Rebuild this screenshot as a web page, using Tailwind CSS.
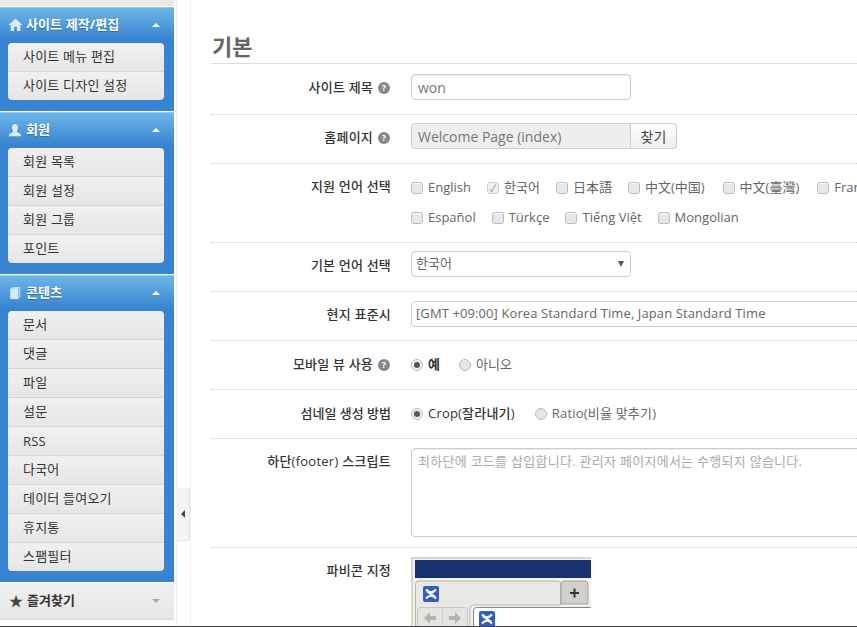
<!DOCTYPE html>
<html lang="ko">

<head>
    <meta charset="UTF-8">
    <title>기본 설정</title>
    <script src="https://cdn.jsdelivr.net/npm/@tailwindcss/browser@4"></script>
</head>

<body class="bg-white text-[#333] text-[13px] font-['Open_Sans','Noto_Sans_CJK_KR',sans-serif]">
    <div class="flex flex-col h-[627px] w-[857px] overflow-hidden">
        <div class="flex flex-1 min-h-0 overflow-hidden">

            <!-- Sidebar -->
            <aside class="w-[174px] shrink-0 flex flex-col">
                <div class="h-[6px] bg-[#e8e8e8]"></div>

                <section class="mt-px h-[104px] bg-gradient-to-b from-[#6db6e8] from-0% to-[#3884d0] to-[32px] border-t border-[#8cc8ee]">
                    <h2 class="flex items-center h-[33px] mb-[2px] pl-2 pr-[14px] text-white font-bold [text-shadow:0_1px_1px_#2a6cad]">
                        <svg viewBox="0 0 16 16" class="w-[15px] h-[15px] mr-[3px] fill-[#d6eafa]"><path d="M8 1.500 0.500 8.500h2.300V15h3.700v-4.500h3V15h3.700V8.500h2.300z"/></svg>
                        <span class="flex-1 tracking-[0.1px]">사이트 제작/편집</span>
                        <span class="border-x-[4px] border-x-transparent border-b-[4px] border-b-white"></span>
                    </h2>
                    <ul class="ml-2 mr-[10px] rounded-[4px] overflow-hidden tracking-[0.2px]">
                        <li class="h-[29px] pl-[15px] flex items-center bg-gradient-to-b from-[#f0f0f0] to-[#e6e6e6] border-b border-[#d6d6d6]">사이트 메뉴 편집</li>
                        <li class="h-[28px] pl-[15px] flex items-center bg-gradient-to-b from-[#f0f0f0] to-[#e6e6e6]">사이트 디자인 설정</li>
                    </ul>
                </section>

                <section class="mt-px h-[162px] bg-gradient-to-b from-[#6db6e8] from-0% to-[#3884d0] to-[32px] border-t border-[#8cc8ee]">
                    <h2 class="flex items-center h-[33px] mb-[2px] pl-2 pr-[14px] text-white font-bold [text-shadow:0_1px_1px_#2a6cad]">
                        <svg viewBox="0 0 16 16" class="w-[14px] h-[14px] mr-1 fill-[#d6eafa]"><path d="M8 1c2.200 0 3.500 1.800 3.500 3.800S10.300 9 10 9.500c0 .8.800 1.200 2.500 1.800S15 12.800 15 15H1c0-2.200.8-3.100 2.500-3.700S6 10.300 6 9.500C5.700 9 4.500 6.800 4.500 4.800S5.800 1 8 1z"/></svg>
                        <span class="flex-1">회원</span>
                        <span class="border-x-[4px] border-x-transparent border-b-[4px] border-b-white"></span>
                    </h2>
                    <ul class="ml-2 mr-[10px] rounded-[4px] overflow-hidden tracking-[0.2px]">
                        <li class="h-[29px] pl-[15px] flex items-center bg-gradient-to-b from-[#f0f0f0] to-[#e6e6e6] border-b border-[#d6d6d6]">회원 목록</li>
                        <li class="h-[29px] pl-[15px] flex items-center bg-gradient-to-b from-[#f0f0f0] to-[#e6e6e6] border-b border-[#d6d6d6]">회원 설정</li>
                        <li class="h-[29px] pl-[15px] flex items-center bg-gradient-to-b from-[#f0f0f0] to-[#e6e6e6] border-b border-[#d6d6d6]">회원 그룹</li>
                        <li class="h-[28px] pl-[15px] flex items-center bg-gradient-to-b from-[#f0f0f0] to-[#e6e6e6]">포인트</li>
                    </ul>
                </section>

                <section class="mt-px h-[307px] bg-gradient-to-b from-[#6db6e8] from-0% to-[#3884d0] to-[32px] border-t border-[#8cc8ee]">
                    <h2 class="flex items-center h-[33px] mb-[2px] pl-2 pr-[14px] text-white font-bold [text-shadow:0_1px_1px_#2a6cad]">
                        <svg viewBox="0 0 16 16" class="w-[14px] h-[14px] mr-1 fill-[#d6eafa]"><path d="M2.500 2.500h9.500V15H2.500z"/><path d="M4 1h10v12h-1V2H4z"/></svg>
                        <span class="flex-1">콘텐츠</span>
                        <span class="border-x-[4px] border-x-transparent border-b-[4px] border-b-white"></span>
                    </h2>
                    <ul class="ml-2 mr-[10px] rounded-[4px] overflow-hidden tracking-[0.2px]">
                        <li class="h-[29px] pl-[15px] flex items-center bg-gradient-to-b from-[#f0f0f0] to-[#e6e6e6] border-b border-[#d6d6d6]">문서</li>
                        <li class="h-[29px] pl-[15px] flex items-center bg-gradient-to-b from-[#f0f0f0] to-[#e6e6e6] border-b border-[#d6d6d6]">댓글</li>
                        <li class="h-[29px] pl-[15px] flex items-center bg-gradient-to-b from-[#f0f0f0] to-[#e6e6e6] border-b border-[#d6d6d6]">파일</li>
                        <li class="h-[29px] pl-[15px] flex items-center bg-gradient-to-b from-[#f0f0f0] to-[#e6e6e6] border-b border-[#d6d6d6]">설문</li>
                        <li class="h-[29px] pl-[15px] pt-px flex items-center bg-gradient-to-b from-[#f0f0f0] to-[#e6e6e6] border-b border-[#d6d6d6]">RSS</li>
                        <li class="h-[29px] pl-[15px] flex items-center bg-gradient-to-b from-[#f0f0f0] to-[#e6e6e6] border-b border-[#d6d6d6]">다국어</li>
                        <li class="h-[29px] pl-[15px] flex items-center bg-gradient-to-b from-[#f0f0f0] to-[#e6e6e6] border-b border-[#d6d6d6]">데이터 들여오기</li>
                        <li class="h-[29px] pl-[15px] flex items-center bg-gradient-to-b from-[#f0f0f0] to-[#e6e6e6] border-b border-[#d6d6d6]">휴지통</li>
                        <li class="h-[28px] pl-[15px] flex items-center bg-gradient-to-b from-[#f0f0f0] to-[#e6e6e6]">스팸필터</li>
                    </ul>
                </section>

                <h2 class="mt-px h-[37px] pb-[1px] flex items-center pl-[9px] pr-[14px] font-bold text-[#333] bg-gradient-to-b from-[#f0f0f0] to-[#e6e6e6] border-b border-[#dcdcdc]">
                    <span class="mr-1 text-[14px] leading-none text-[#444]">★</span>
                    <span class="flex-1">즐겨찾기</span>
                    <span class="border-x-[4px] border-x-transparent border-t-[4px] border-t-[#aaa]"></span>
                </h2>
            </aside>

            <!-- Sidebar collapse handle -->
            <div class="w-[16px] shrink-0 flex flex-col pl-[2px]">
                <div class="flex-1 border-l border-[#f0f0f0]"></div>
                <div class="h-[53px] bg-[#f4f4f4] border-b border-r border-[#e4e4e4] rounded-br-[2px] flex items-center justify-center">
                    <span class="border-y-[4px] border-y-transparent border-r-[4px] border-r-[#444]"></span>
                </div>
                <div class="h-[85px] border-l border-[#f0f0f0]"></div>
            </div>

            <!-- Main -->
            <main class="flex-1 min-w-0 border-l border-[#f0f0f0] pl-[20px] overflow-hidden">
                <h1 class="h-[64px] pt-[31px] pl-px border-b border-[#ddd] text-[22px] leading-[30px] font-bold text-[#666]">기본</h1>

                <div class="flex h-[51px] pt-[10px] border-b border-dotted border-[#ccc]">
                    <div class="w-[200px] pr-[21px] shrink-0 flex justify-end items-center h-[28px] font-medium tracking-[0.2px] gap-[5px]">사이트 제목 <span class="w-[12px] h-[12px] rounded-full bg-[#888] text-white text-[9px] leading-[12px] text-center font-bold">?</span></div>
                    <div class="w-[220px] h-[26px] px-[6px] flex items-center border border-[#ccc] rounded-[4px] text-[14px] text-[#777] shadow-[inset_0_1px_1px_#eee]">won</div>
                </div>

                <div class="flex h-[49px] pt-[8px] border-b border-dotted border-[#ccc]">
                    <div class="w-[200px] pr-[21px] shrink-0 flex justify-end items-center h-[30px] font-medium tracking-[0.2px] gap-[5px]">홈페이지 <span class="w-[12px] h-[12px] rounded-full bg-[#888] text-white text-[9px] leading-[12px] text-center font-bold">?</span></div>
                    <div class="w-[220px] h-[26px] px-[6px] flex items-center border border-[#ccc] rounded-l-[4px] bg-[#eee] text-[14px] text-[#777]">Welcome Page (index)</div>
                    <div class="w-[46px] h-[26px] flex items-center justify-center border border-l-0 border-[#ccc] rounded-r-[4px] bg-gradient-to-b from-white to-[#eee] text-[14px] text-[#444]">찾기</div>
                </div>

                <div class="flex h-[79px] pt-[9px] border-b border-dotted border-[#ccc]">
                    <div class="w-[200px] pr-[20px] shrink-0 h-[28px] flex justify-end items-center font-medium tracking-[0.2px]">지원 언어 선택</div>
                    <div class="flex flex-col w-[480px] shrink-0 text-[#666]">
                        <div class="flex h-[30px] items-center whitespace-nowrap">
                            <span class="shrink-0 w-[12px] h-[12px] mr-[5px] rounded-[3px] border border-[#bbb] bg-[#e8e8e8] shadow-[inset_0_1px_0_#fff]"></span><span class="mr-[16px]">English</span>
                            <span class="shrink-0 w-[12px] h-[12px] mr-[5px] rounded-[3px] border border-[#ccc] bg-[#f2f2f2] text-[#888] text-[10px] leading-[10px] text-center">✓</span><span class="mr-[16px]">한국어</span>
                            <span class="shrink-0 w-[12px] h-[12px] mr-[5px] rounded-[3px] border border-[#bbb] bg-[#e8e8e8] shadow-[inset_0_1px_0_#fff]"></span><span class="mr-[16px]">日本語</span>
                            <span class="shrink-0 w-[12px] h-[12px] mr-[5px] rounded-[3px] border border-[#bbb] bg-[#e8e8e8] shadow-[inset_0_1px_0_#fff]"></span><span class="mr-[18px]">中文(中国)</span>
                            <span class="shrink-0 w-[12px] h-[12px] mr-[5px] rounded-[3px] border border-[#bbb] bg-[#e8e8e8] shadow-[inset_0_1px_0_#fff]"></span><span class="mr-[18px]">中文(臺灣)</span>
                            <span class="shrink-0 w-[12px] h-[12px] mr-[5px] rounded-[3px] border border-[#bbb] bg-[#e8e8e8] shadow-[inset_0_1px_0_#fff]"></span><span>Français</span>
                        </div>
                        <div class="flex h-[30px] items-center whitespace-nowrap">
                            <span class="shrink-0 w-[12px] h-[12px] mr-[5px] rounded-[3px] border border-[#bbb] bg-[#e8e8e8] shadow-[inset_0_1px_0_#fff]"></span><span class="mr-[16px]">Español</span>
                            <span class="shrink-0 w-[12px] h-[12px] mr-[5px] rounded-[3px] border border-[#bbb] bg-[#e8e8e8] shadow-[inset_0_1px_0_#fff]"></span><span class="mr-[16px]">Türkçe</span>
                            <span class="shrink-0 w-[12px] h-[12px] mr-[5px] rounded-[3px] border border-[#bbb] bg-[#e8e8e8] shadow-[inset_0_1px_0_#fff]"></span><span class="mr-[16px]">Tiếng Việt</span>
                            <span class="shrink-0 w-[12px] h-[12px] mr-[5px] rounded-[3px] border border-[#bbb] bg-[#e8e8e8] shadow-[inset_0_1px_0_#fff]"></span><span>Mongolian</span>
                        </div>
                    </div>
                </div>

                <div class="flex h-[49px] pt-[8px] border-b border-dotted border-[#ccc]">
                    <div class="w-[200px] pr-[20px] shrink-0 flex justify-end items-center h-[29px] font-medium tracking-[0.2px]">기본 언어 선택</div>
                    <div class="w-[220px] h-[26px] pl-[4px] pr-[6px] flex items-center justify-between border border-[#ccc] rounded-[4px] text-[#666]">한국어 <span class="border-x-[3px] border-x-transparent border-t-[6px] border-t-[#555]"></span></div>
                </div>

                <div class="flex h-[49px] pt-[9px] border-b border-dotted border-[#ccc]">
                    <div class="w-[200px] pr-[20px] shrink-0 flex justify-end items-center h-[28px] font-medium tracking-[0.2px]">현지 표준시</div>
                    <div class="w-[460px] shrink-0 h-[26px] pl-[4px] flex items-center border border-[#ccc] rounded-[4px] text-[#666] whitespace-nowrap tracking-[0.1px]">[GMT +09:00] Korea Standard Time, Japan Standard Time</div>
                </div>

                <div class="flex h-[49px] pt-[9px] border-b border-dotted border-[#ccc]">
                    <div class="w-[200px] pr-[21px] shrink-0 flex justify-end items-center h-[30px] font-medium tracking-[0.2px] gap-[5px]">모바일 뷰 사용 <span class="w-[12px] h-[12px] rounded-full bg-[#888] text-white text-[9px] leading-[12px] text-center font-bold">?</span></div>
                    <div class="flex h-[30px] items-center text-[#666]">
                        <span class="w-[12px] h-[12px] mr-[5px] rounded-full border border-[#bbb] bg-[#eee] flex items-center justify-center"><span class="w-[6px] h-[6px] rounded-full bg-[#555]"></span></span><span class="mr-[19px] font-bold text-[#333]">예</span>
                        <span class="w-[12px] h-[12px] mr-[5px] rounded-full border border-[#bbb] bg-[#e6e6e6]"></span><span>아니오</span>
                    </div>
                </div>

                <div class="flex h-[49px] pt-[9px] border-b border-dotted border-[#ccc]">
                    <div class="w-[200px] pr-[20px] shrink-0 flex justify-end items-center h-[30px] font-medium">섬네일 생성 방법</div>
                    <div class="flex h-[30px] items-center text-[#666]">
                        <span class="w-[12px] h-[12px] mr-[5px] rounded-full border border-[#bbb] bg-[#eee] flex items-center justify-center"><span class="w-[6px] h-[6px] rounded-full bg-[#555]"></span></span><span class="mr-[20px] font-medium text-[#333] tracking-[0.2px]">Crop(잘라내기)</span>
                        <span class="w-[12px] h-[12px] mr-[5px] rounded-full border border-[#bbb] bg-[#e6e6e6]"></span><span class="tracking-[0.2px]">Ratio(비율 맞추기)</span>
                    </div>
                </div>

                <div class="flex h-[109px] pt-[9px] border-b border-dotted border-[#ccc]">
                    <div class="w-[200px] pr-[20px] shrink-0 flex justify-end h-[28px] items-center font-medium tracking-[0.25px]">하단(footer) 스크립트</div>
                    <div class="w-[460px] shrink-0 h-[89px] px-[6px] py-[3px] border border-[#ccc] rounded-[4px] text-[#aaa] whitespace-nowrap tracking-[0.28px] shadow-[inset_0_1px_1px_#eee]">최하단에 코드를 삽입합니다. 관리자 페이지에서는 수행되지 않습니다.</div>
                </div>

                <div class="flex pt-[9px]">
                    <div class="w-[200px] pr-[20px] shrink-0 flex justify-end h-[28px] items-center font-medium tracking-[0.2px]">파비콘 지정</div>
                    <svg viewBox="0 0 180 70" class="w-[180px] h-[70px] shrink-0">
                        <rect width="180" height="70" fill="#f4f2ee"/>
                        <path d="M0 0h180v2H2v68H0z" fill="#d8d4c8"/>
                        <rect x="4" y="3" width="176" height="18" fill="#17326f"/>
                        <path d="M4.500 70V27q0-3 3-3h140q2 0 2 3v21H63q-3 0-4 3v19z" fill="#ebe9e5" stroke="#b8b6b0"/>
                        <path d="M150 47V27q0-3 3-3h21q3 0 3 3v20z" fill="#d2d0ca" stroke="#a8a6a0"/>
                        <path d="M159 35h9v2h-9zM162.500 31.500h2v9h-2z" fill="#333"/>
                        <rect x="12" y="29" width="16" height="16" rx="2" fill="#2f5fc6"/>
                        <path d="M15 32.500Q20 38 25 32.500M15 41.500Q20 36 25 41.500M16 34L24 40" stroke="#fff" stroke-width="2.200" fill="none"/>
                        <rect x="6.500" y="50.500" width="50" height="22" rx="3" fill="#e6e4de" stroke="#c8c6c0"/>
                        <path d="M31.500 51v19" stroke="#d0cec8"/>
                        <path d="M13 61l6-6v4h6v4h-6v4zM50 61l-6-6v4h-6v4h6v4z" fill="#b4b4b0"/>
                        <rect x="62.500" y="50.500" width="120" height="22" rx="3" fill="#fff" stroke="#888"/>
                        <rect x="68" y="54" width="16" height="16" rx="2" fill="#2f5fc6"/>
                        <path d="M71 57.500Q76 63 81 57.500M71 66.500Q76 61 81 66.500M72 59L80 65" stroke="#fff" stroke-width="2.200" fill="none"/>
                    </svg>
                </div>
            </main>
        </div>
        <div class="h-px shrink-0 bg-[#444]"></div>
    </div>
</body>

</html>
